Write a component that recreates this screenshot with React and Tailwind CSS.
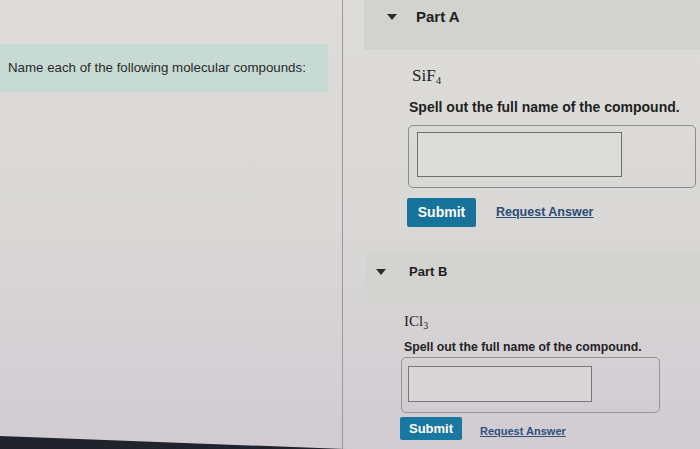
const Caret = ({ size = 10 }) => (
  <svg width={size} height={size * 0.6} viewBox="0 0 10 6">
    <path d="M0 0 L10 0 L5 6 Z" fill="#2b2b2b" />
  </svg>
);

export default function App() {
  return (
    <div
      className="relative flex h-[449px] w-[700px] overflow-hidden bg-linear-to-b from-[#dddcd9] via-[#d9d8d6] to-[#d1cbd2] text-[#222]"
      style={{ fontFamily: '"Liberation Sans", Arial, sans-serif' }}
    >
      {/* Intro column */}
      <div className="w-[343px] shrink-0 border-r border-[#9a9a9a] pt-[44px]">
        <div className="flex h-[48px] w-[328px] items-center bg-[#c8dad4] pl-[8px] text-[13.3px] text-[#2a2a2a]">
          Name each of the following molecular compounds:
        </div>
      </div>

      {/* Parts */}
      <div className="flex flex-1 flex-col">
        {/* Part A */}
        <div className="ml-[21px] flex h-[50px] items-center bg-[#d2d2cf] pb-[16px]">
          <div className="ml-[23px] mr-[19px]">
            <Caret size={10} />
          </div>
          <span className="text-[15px] font-bold text-[#1f1f1f]">Part A</span>
        </div>

        <div className="ml-[66px] mt-[16px]">
          <p
            className="ml-[3px] text-[17px] leading-[20px] text-[#1e1e1e]"
            style={{ fontFamily: '"Liberation Serif", "Times New Roman", serif' }}
          >
            SiF<sub className="text-[11px]">4</sub>
          </p>
          <p className="mt-[12px] text-[14px] font-bold leading-[18px] text-[#1f1f1f]">
            Spell out the full name of the compound.
          </p>
          <div className="-ml-[1px] mt-[9px] h-[63px] w-[288px] rounded-[5px] border border-[#8c8c8c] pl-[8px] pt-[6px]">
            <div className="h-[45px] w-[205px] border border-[#6e6e6e] bg-[#dcdcd9]" />
          </div>
          <div className="-ml-[2px] mt-[10px] flex items-center">
            <button className="h-[29px] w-[69px] rounded-[2px] bg-[#17739c] text-[14px] font-bold text-white">
              Submit
            </button>
            <span className="ml-[20px] text-[12.5px] font-bold text-[#2d4d78] underline">
              Request Answer
            </span>
          </div>
        </div>

        {/* Part B */}
        <div className="ml-[23px] mt-[26px] flex h-[50px] items-center bg-[#d3d3d0] pb-[12px]">
          <div className="ml-[10px] mr-[23px]">
            <Caret size={10} />
          </div>
          <span className="text-[13px] font-bold text-[#1f1f1f]">Part B</span>
        </div>

        <div className="ml-[61px] mt-[9px]">
          <p
            className="text-[15px] leading-[18px] text-[#1e1e1e]"
            style={{ fontFamily: '"Liberation Serif", "Times New Roman", serif' }}
          >
            ICl<sub className="text-[10px]">3</sub>
          </p>
          <p className="mt-[9px] text-[12.3px] font-bold leading-[16px] text-[#232323]">
            Spell out the full name of the compound.
          </p>
          <div className="-ml-[3px] mt-[2px] h-[56px] w-[259px] rounded-[5px] border border-[#949494] pl-[6px] pt-[8px]">
            <div className="h-[36px] w-[184px] border border-[#777] bg-[#d8d6d6]" />
          </div>
          <div className="-ml-[4px] mt-[4px] flex items-center">
            <button className="h-[23px] w-[62px] rounded-[2px] bg-[#1978a0] text-[13px] font-bold text-white">
              Submit
            </button>
            <span className="ml-[18px] mt-[6px] text-[11px] font-bold text-[#2f4f7c] underline">
              Request Answer
            </span>
          </div>
        </div>
      </div>

      {/* screen edge at the bottom of the photo */}
      <div className="absolute bottom-0 left-0 h-[13px] w-[345px] bg-[#20232c] [clip-path:polygon(0_0,100%_100%,0_100%)]" />
    </div>
  );
}
